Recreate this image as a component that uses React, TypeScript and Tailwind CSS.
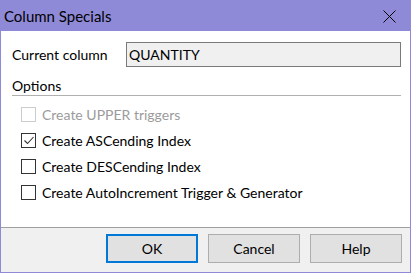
import React from "react";

function Check({ checked, disabled, label }: { checked?: boolean; disabled?: boolean; label: string }) {
  return (
    <div className="flex h-[26px] items-center">
      <div
        className={
          "ml-[20px] flex h-[15px] w-[15px] items-center justify-center border bg-white " +
          (disabled ? "border-[#cccccc]" : "border-[#333333]")
        }
      >
        {checked && (
          <svg width="13" height="13" viewBox="0 0 13 13">
            <path d="M2.5 6.5 L5.5 9.5 L11.5 3" fill="none" stroke="#333" strokeWidth="1.1" />
          </svg>
        )}
      </div>
      <span className={"ml-[6px] " + (disabled ? "text-[#9b9b9b]" : "text-black")}>{label}</span>
    </div>
  );
}

export default function App() {
  return (
    <div
      className="flex h-[273px] w-[411px] flex-col border border-[#8f8ad8] bg-[#8f8ad8] text-[14px] text-black"
      style={{ fontFamily: 'Lato, "Noto Sans", sans-serif' }}
    >
      <div className="flex h-[30px] shrink-0 items-center justify-between bg-[#8f8ad8]">
        <span className="ml-[3px] text-[15px] leading-none">Column Specials</span>
        <svg width="13" height="13" viewBox="0 0 13 13" className="mr-[14px]">
          <path d="M0.5 0.5 L12.5 12.5 M12.5 0.5 L0.5 12.5" stroke="#000" strokeWidth="1" />
        </svg>
      </div>
      <div className="flex h-[196px] flex-col bg-white pl-[11px] pr-[9px] pt-[11px]">
        <div className="flex items-center">
          <span className="w-[114px] shrink-0 leading-[24px]">Current column</span>
          <div className="flex h-[25px] flex-1 items-center border border-[#7a7a7a] bg-[#f0f0f0] pl-[2px]">
            QUANTITY
          </div>
        </div>
        <div className="mt-[10px] border-b border-[#b0b0b0] leading-[18px]">Options</div>
        <div className="mt-[5px] flex flex-col -ml-[11px]">
          <Check disabled label="Create UPPER triggers" />
          <Check checked label="Create ASCending Index" />
          <Check label="Create DESCending Index" />
          <Check label="Create AutoIncrement Trigger & Generator" />
        </div>
      </div>
      <div className="flex h-[45px] justify-end gap-[10px] border-t border-[#a0a0a0] bg-[#f0f0f0] pr-[8px] pt-[6px]">
        <button className="h-[29px] w-[92px] border-2 border-[#0078d7] bg-[#e1e1e1]">OK</button>
        <button className="h-[29px] w-[92px] border border-[#adadad] bg-[#e1e1e1]">Cancel</button>
        <button className="h-[29px] w-[92px] border border-[#adadad] bg-[#e1e1e1]">Help</button>
      </div>
    </div>
  );
}
